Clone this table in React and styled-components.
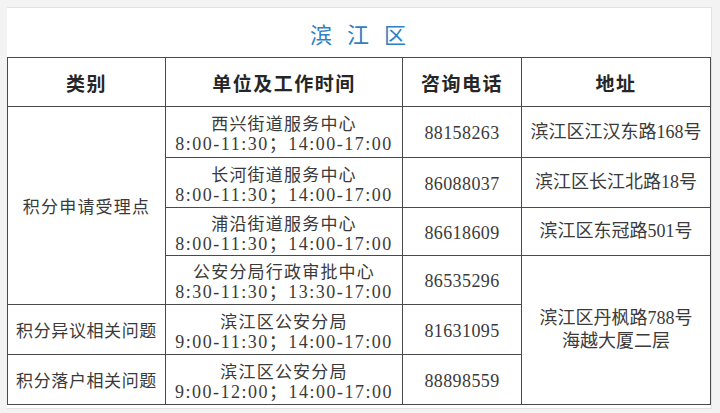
import styled, { createGlobalStyle } from 'styled-components';

const GlobalStyle = createGlobalStyle`
  html, body {
    margin: 0;
    padding: 0;
    background: #f3f3f3;
  }
  body {
    font-family: "Liberation Serif", "Noto Sans CJK SC", serif;
  }
`;

const Page = styled.div`
  width: 720px;
  height: 413px;
  padding: 7px 8px 5px 7px;
  box-sizing: border-box;
`;

const Panel = styled.div`
  background: #ffffff;
  border: 1px solid #e2e2e2;
  border-left: none;
  padding: 0 1px 3px 0;
  box-sizing: border-box;
`;

const Title = styled.div`
  height: 49px;
  display: flex;
  align-items: center;
  justify-content: center;
  font-family: "Noto Sans CJK SC", sans-serif;
  font-size: 22px;
  letter-spacing: 5px;
  color: #2f7fc1;
  padding-left: 4px;
`;

const Table = styled.table`
  width: 703px;
  border-collapse: collapse;
  table-layout: fixed;
  color: #333;
`;

const Th = styled.th`
  border: 1px solid #4a4a4a;
  font-family: "Noto Sans CJK SC", sans-serif;
  font-size: 19px;
  font-weight: 700;
  letter-spacing: 1.5px;
  color: #262626;
  padding: 0;
`;

const Td = styled.td`
  border: 1px solid #4a4a4a;
  text-align: center;
  vertical-align: middle;
  padding: 0;
  font-size: 17px;
  line-height: 23px;
  font-family: "Liberation Serif", "Noto Sans CJK SC", serif;
`;

const Cjk = styled.div`
  font-family: "Noto Sans CJK SC", sans-serif;
  letter-spacing: ${(p) => p.$spacing || 1}px;
  font-size: 17px;
  color: #3a3a3a;
`;

const Unit = styled(Cjk)`
  line-height: 21px;
  padding-top: 3px;
`;

const Mixed = styled.div`
  font-family: "Liberation Serif", "Noto Sans CJK SC", serif;
  font-size: 18px;
  letter-spacing: ${(p) => p.$spacing || 0}px;
  color: #3a3a3a;
`;

const Time = styled.div`
  font-family: "Liberation Serif", "Noto Sans CJK SC", serif;
  font-size: 18px;
  line-height: 22px;
  letter-spacing: 1.5px;
  color: #3a3a3a;
`;

const Phone = styled.div`
  font-family: "Liberation Serif", serif;
  font-size: 18px;
  letter-spacing: 0.4px;
  color: #3a3a3a;
  padding-top: 3px;
`;

const rows = [
  { h: 51, unit: '西兴街道服务中心', time: '8:00-11:30；14:00-17:00', phone: '88158263', addr: '滨江区江汉东路168号' },
  { h: 50, unit: '长河街道服务中心', time: '8:00-11:30；14:00-17:00', phone: '86088037', addr: '滨江区长江北路18号' },
  { h: 48, unit: '浦沿街道服务中心', time: '8:00-11:30；14:00-17:00', phone: '86618609', addr: '滨江区东冠路501号' },
  { h: 49, unit: '公安分局行政审批中心', time: '8:30-11:30；13:30-17:00', phone: '86535296', addr: ['滨江区丹枫路788号', '海越大厦二层'], addrSpan: 3 },
  { h: 50, cat: '积分异议相关问题', unit: '滨江区公安分局', time: '9:00-11:30；14:00-17:00', phone: '81631095' },
  { h: 50, cat: '积分落户相关问题', unit: '滨江区公安分局', time: '9:00-12:00；14:00-17:00', phone: '88898559' },
];

export default function App() {
  return (
    <>
      <GlobalStyle />
      <Page>
        <Panel>
          <Title>滨 江 区</Title>
          <Table>
            <colgroup>
              <col style={{ width: 158 }} />
              <col style={{ width: 237 }} />
              <col style={{ width: 119 }} />
              <col style={{ width: 189 }} />
            </colgroup>
            <thead>
              <tr style={{ height: 49 }}>
                <Th>类别</Th>
                <Th>单位及工作时间</Th>
                <Th>咨询电话</Th>
                <Th>地址</Th>
              </tr>
            </thead>
            <tbody>
              {rows.map((r, i) => (
                <tr key={i} style={{ height: r.h }}>
                  {i === 0 && (
                    <Td rowSpan={4}>
                      <Cjk $spacing={1.2}>积分申请受理点</Cjk>
                    </Td>
                  )}
                  {r.cat && (
                    <Td>
                      <Cjk $spacing={0.6}>{r.cat}</Cjk>
                    </Td>
                  )}
                  <Td>
                    <Unit $spacing={1.2}>{r.unit}</Unit>
                    <Time>{r.time}</Time>
                  </Td>
                  <Td>
                    <Phone>{r.phone}</Phone>
                  </Td>
                  {i < 3 && (
                    <Td>
                      <Mixed>{r.addr}</Mixed>
                    </Td>
                  )}
                  {r.addrSpan && (
                    <Td rowSpan={r.addrSpan}>
                      {r.addr.map((line) => (
                        <Mixed key={line}>{line}</Mixed>
                      ))}
                    </Td>
                  )}
                </tr>
              ))}
            </tbody>
          </Table>
        </Panel>
      </Page>
    </>
  );
}
